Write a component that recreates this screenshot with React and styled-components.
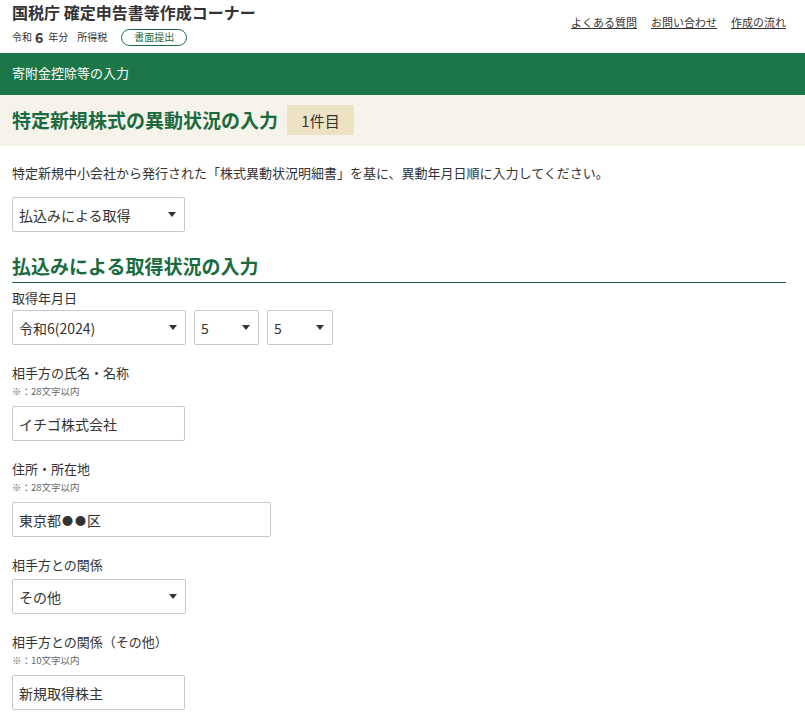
import React from "react";
import styled, { createGlobalStyle } from "styled-components";

const Global = createGlobalStyle`
  html, body { margin: 0; padding: 0; background: #fff; }
  body { font-family: "Noto Sans CJK JP", "Noto Sans", sans-serif; color: #333; }
  * { box-sizing: border-box; }
`;

const Page = styled.div`
  width: 805px;
`;

const Header = styled.header`
  height: 53px;
  display: flex;
  justify-content: space-between;
  padding: 0 19px 0 12px;
`;

const Brand = styled.div`
  display: flex;
  flex-direction: column;
`;

const SiteTitle = styled.div`
  font-size: 16px;
  font-weight: 700;
  line-height: 22px;
  margin-top: 1px;
  color: #333;
`;

const YearLine = styled.div`
  display: flex;
  align-items: center;
  margin-top: 5px;
  font-size: 10px;
  line-height: 18px;
  color: #333;
`;

const YearNum = styled.span`
  font-size: 14px;
  font-weight: 700;
  margin: 0 5px 0 3px;
`;

const Gap = styled.span`
  width: ${(p) => p.w}px;
  display: inline-block;
`;

const Pill = styled.span`
  display: inline-flex;
  align-items: center;
  justify-content: center;
  width: 66px;
  height: 17px;
  border: 1px solid #1a6b45;
  border-radius: 9px;
  color: #1a6b45;
  font-size: 10px;
`;

const Links = styled.nav`
  display: flex;
  gap: 14px;
  margin-top: 14px;
  font-size: 11px;
  line-height: 16px;
`;

const Link = styled.a`
  color: #333;
  text-decoration: underline;
  cursor: pointer;
`;

const GreenBar = styled.div`
  height: 42px;
  background: #1b7747;
  color: #fff;
  font-size: 13px;
  display: flex;
  align-items: center;
  padding: 0 0 3px 12px;
`;

const TitleBand = styled.div`
  background: #f5f3ea;
  padding: 10px 12px 11px;
  display: flex;
  align-items: center;
`;

const PageTitle = styled.h1`
  margin: 0;
  font-size: 19px;
  font-weight: 700;
  color: #1a6b40;
  line-height: 30px;
`;

const Badge = styled.span`
  margin-left: 9px;
  background: #ede3c4;
  height: 30px;
  width: 67px;
  display: inline-flex;
  align-items: center;
  justify-content: center;
  font-size: 15px;
  color: #333;
`;

const Content = styled.main`
  padding: 0 19px 0 12px;
`;

const Lead = styled.p`
  margin: 17px 0 14px;
  font-size: 13px;
  line-height: 20px;
`;

const SelectWrap = styled.div`
  position: relative;
  width: ${(p) => p.w}px;
  height: 35px;
`;

const Select = styled.select`
  appearance: none;
  -webkit-appearance: none;
  width: 100%;
  height: 100%;
  border: 1px solid #c8c8c8;
  border-radius: 2px;
  background: #fff;
  padding: 0 20px 0 6px;
  font-family: inherit;
  font-size: 14px;
  color: #333;
`;

const Arrow = styled.svg`
  position: absolute;
  right: 9px;
  top: 15px;
  width: 8px;
  height: 5px;
  pointer-events: none;
`;

const Input = styled.input`
  display: block;
  width: ${(p) => p.w}px;
  height: 35px;
  border: 1px solid #c8c8c8;
  border-radius: 2px;
  padding: 0 6px;
  font-family: inherit;
  font-size: 14px;
  color: #333;
`;

const Dot = styled.span`
  font-size: 11px;
  margin: 0 1px;
`;

const SectionHeading = styled.h2`
  margin: 21px 0 0;
  padding-bottom: 3px;
  border-bottom: 1.5px solid #1a6b45;
  font-size: 19px;
  font-weight: 700;
  line-height: 26px;
  color: #1a6b40;
`;

const Fields = styled.div`
  display: flex;
  flex-direction: column;
  gap: 18px;
  padding-top: 5px;
`;

const Field = styled.div`
  display: flex;
  flex-direction: column;
`;

const Label = styled.div`
  font-size: 13px;
  line-height: 20px;
  margin-bottom: ${(p) => p.$mb}px;
`;

const Note = styled.div`
  font-size: 9.5px;
  line-height: 16px;
  color: #666;
  margin-bottom: 7px;
`;

const Row = styled.div`
  display: flex;
  gap: 8px;
`;

const FakeInput = styled.div`
  width: ${(p) => p.w}px;
  height: 35px;
  border: 1px solid #c8c8c8;
  border-radius: 2px;
  padding: 0 6px;
  font-size: 14px;
  color: #333;
  display: flex;
  align-items: center;
`;

function Dropdown({ w, value, options }) {
  return (
    <SelectWrap w={w}>
      <Select defaultValue={value}>
        {options.map((o) => (
          <option key={o} value={o}>
            {o}
          </option>
        ))}
      </Select>
      <Arrow viewBox="0 0 8 5">
        <path d="M0 0 L8 0 L4 5 Z" fill="#333" />
      </Arrow>
    </SelectWrap>
  );
}

export default function App() {
  return (
    <Page>
      <Global />
      <Header>
        <Brand>
          <SiteTitle>国税庁 確定申告書等作成コーナー</SiteTitle>
          <YearLine>
            令和<YearNum>6</YearNum>年分<Gap w={9} />所得税<Gap w={14} />
            <Pill>書面提出</Pill>
          </YearLine>
        </Brand>
        <Links>
          <Link>よくある質問</Link>
          <Link>お問い合わせ</Link>
          <Link>作成の流れ</Link>
        </Links>
      </Header>
      <GreenBar>寄附金控除等の入力</GreenBar>
      <TitleBand>
        <PageTitle>特定新規株式の異動状況の入力</PageTitle>
        <Badge>1件目</Badge>
      </TitleBand>
      <Content>
        <Lead>
          特定新規中小会社から発行された「株式異動状況明細書」を基に、異動年月日順に入力してください。
        </Lead>
        <Dropdown w={173} value="払込みによる取得" options={["払込みによる取得", "その他"]} />
        <SectionHeading>払込みによる取得状況の入力</SectionHeading>
        <Fields>
          <Field>
            <Label $mb={2}>取得年月日</Label>
            <Row>
              <Dropdown w={174} value="令和6(2024)" options={["令和6(2024)"]} />
              <Dropdown w={65} value="5" options={["5"]} />
              <Dropdown w={66} value="5" options={["5"]} />
            </Row>
          </Field>
          <Field>
            <Label $mb={0}>相手方の氏名・名称</Label>
            <Note>※：28文字以内</Note>
            <Input w={173} defaultValue="イチゴ株式会社" />
          </Field>
          <Field>
            <Label $mb={0}>住所・所在地</Label>
            <Note>※：28文字以内</Note>
            <FakeInput w={259}>
              東京都<Dot>●</Dot><Dot>●</Dot>区
            </FakeInput>
          </Field>
          <Field>
            <Label $mb={4}>相手方との関係</Label>
            <Dropdown w={174} value="その他" options={["その他"]} />
          </Field>
          <Field>
            <Label $mb={0}>相手方との関係（その他）</Label>
            <Note>※：10文字以内</Note>
            <Input w={173} defaultValue="新規取得株主" />
          </Field>
        </Fields>
      </Content>
    </Page>
  );
}
